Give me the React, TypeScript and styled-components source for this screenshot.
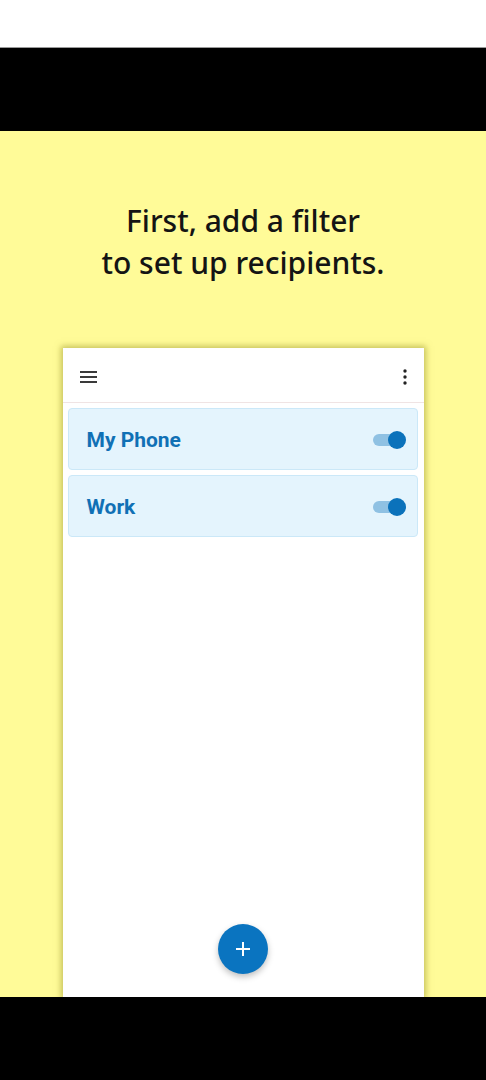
import React from "react";
import styled, { createGlobalStyle } from "styled-components";

const GlobalStyle = createGlobalStyle`
  html, body {
    margin: 0;
    padding: 0;
    background: #ffffff;
  }
  * {
    box-sizing: border-box;
  }
`;

const Screen = styled.div`
  width: 486px;
  height: 1080px;
  display: flex;
  flex-direction: column;
  overflow: hidden;
`;

const StatusStrip = styled.div`
  height: 48px;
  background: #ffffff;
  border-bottom: 1px solid #9a9a9a;
`;

const BlackBar = styled.div<{ h: number }>`
  height: ${(p) => p.h}px;
  background: #000000;
  flex-shrink: 0;
`;

const Stage = styled.div`
  flex: 1;
  background: #fffb98;
  display: flex;
  flex-direction: column;
  align-items: center;
  padding-top: 69px;
  min-height: 0;
`;

const Heading = styled.h1`
  margin: 0;
  font-family: "Noto Sans", "Open Sans", sans-serif;
  font-weight: 500;
  font-size: 30px;
  line-height: 42px;
  color: #141414;
  text-align: center;
`;

const Card = styled.div`
  margin-top: 64px;
  width: 361px;
  flex: 1;
  background: #ffffff;
  display: flex;
  flex-direction: column;
  box-shadow: 0 0 6px 2px rgba(150, 145, 40, 0.55);
`;

const AppBar = styled.div`
  height: 55px;
  display: flex;
  align-items: center;
  justify-content: space-between;
  padding: 4px 16px 0 17px;
  border-bottom: 1px solid #f0e4e4;
`;

const List = styled.div`
  display: flex;
  flex-direction: column;
  gap: 5px;
  padding: 5px 6px 0 5px;
`;

const Row = styled.div`
  height: 62px;
  display: flex;
  align-items: center;
  justify-content: space-between;
  padding: 2px 14px 0 18px;
  background: #e4f4fd;
  border: 1px solid #cbe8f8;
  border-radius: 4px;
`;

const RowLabel = styled.span`
  font-family: Roboto, "Liberation Sans", sans-serif;
  font-weight: 700;
  font-size: 21px;
  color: #1070b5;
`;

const Toggle = styled.div`
  position: relative;
  width: 30px;
  height: 12px;
  border-radius: 6px;
  background: #8fc1e3;
`;

const Knob = styled.div`
  position: absolute;
  right: -3px;
  top: -3px;
  width: 18px;
  height: 18px;
  border-radius: 50%;
  background: #0b72bb;
`;

const Fill = styled.div`
  flex: 1;
`;

const Fab = styled.button`
  align-self: center;
  margin: 0 0 23px 0;
  width: 50px;
  height: 50px;
  border-radius: 50%;
  border: none;
  background: #0a74c0;
  box-shadow: 0 3px 6px rgba(0, 0, 0, 0.25);
  display: flex;
  align-items: center;
  justify-content: center;
  padding: 0;
`;

function MenuIcon() {
  return (
    <svg width="18" height="14" viewBox="0 0 18 14">
      <rect x="0" y="1" width="17" height="2" fill="#3a3a3a" />
      <rect x="0" y="6" width="17" height="2" fill="#3a3a3a" />
      <rect x="0" y="11" width="17" height="2" fill="#3a3a3a" />
    </svg>
  );
}

function MoreIcon() {
  return (
    <svg width="6" height="16" viewBox="0 0 6 16">
      <circle cx="3" cy="2" r="1.7" fill="#222" />
      <circle cx="3" cy="8" r="1.7" fill="#222" />
      <circle cx="3" cy="14" r="1.7" fill="#222" />
    </svg>
  );
}

function PlusIcon() {
  return (
    <svg width="16" height="16" viewBox="0 0 16 16">
      <rect x="7" y="1" width="2" height="14" fill="#ffffff" />
      <rect x="1" y="7" width="14" height="2" fill="#ffffff" />
    </svg>
  );
}

const filters = ["My Phone", "Work"];

export default function App() {
  return (
    <>
      <GlobalStyle />
      <Screen>
        <StatusStrip />
        <BlackBar h={83} />
        <Stage>
          <Heading>
            First, add a filter
            <br />
            to set up recipients.
          </Heading>
          <Card>
            <AppBar>
              <MenuIcon />
              <MoreIcon />
            </AppBar>
            <List>
              {filters.map((name) => (
                <Row key={name}>
                  <RowLabel>{name}</RowLabel>
                  <Toggle>
                    <Knob />
                  </Toggle>
                </Row>
              ))}
            </List>
            <Fill />
            <Fab>
              <PlusIcon />
            </Fab>
          </Card>
        </Stage>
        <BlackBar h={83} />
      </Screen>
    </>
  );
}
